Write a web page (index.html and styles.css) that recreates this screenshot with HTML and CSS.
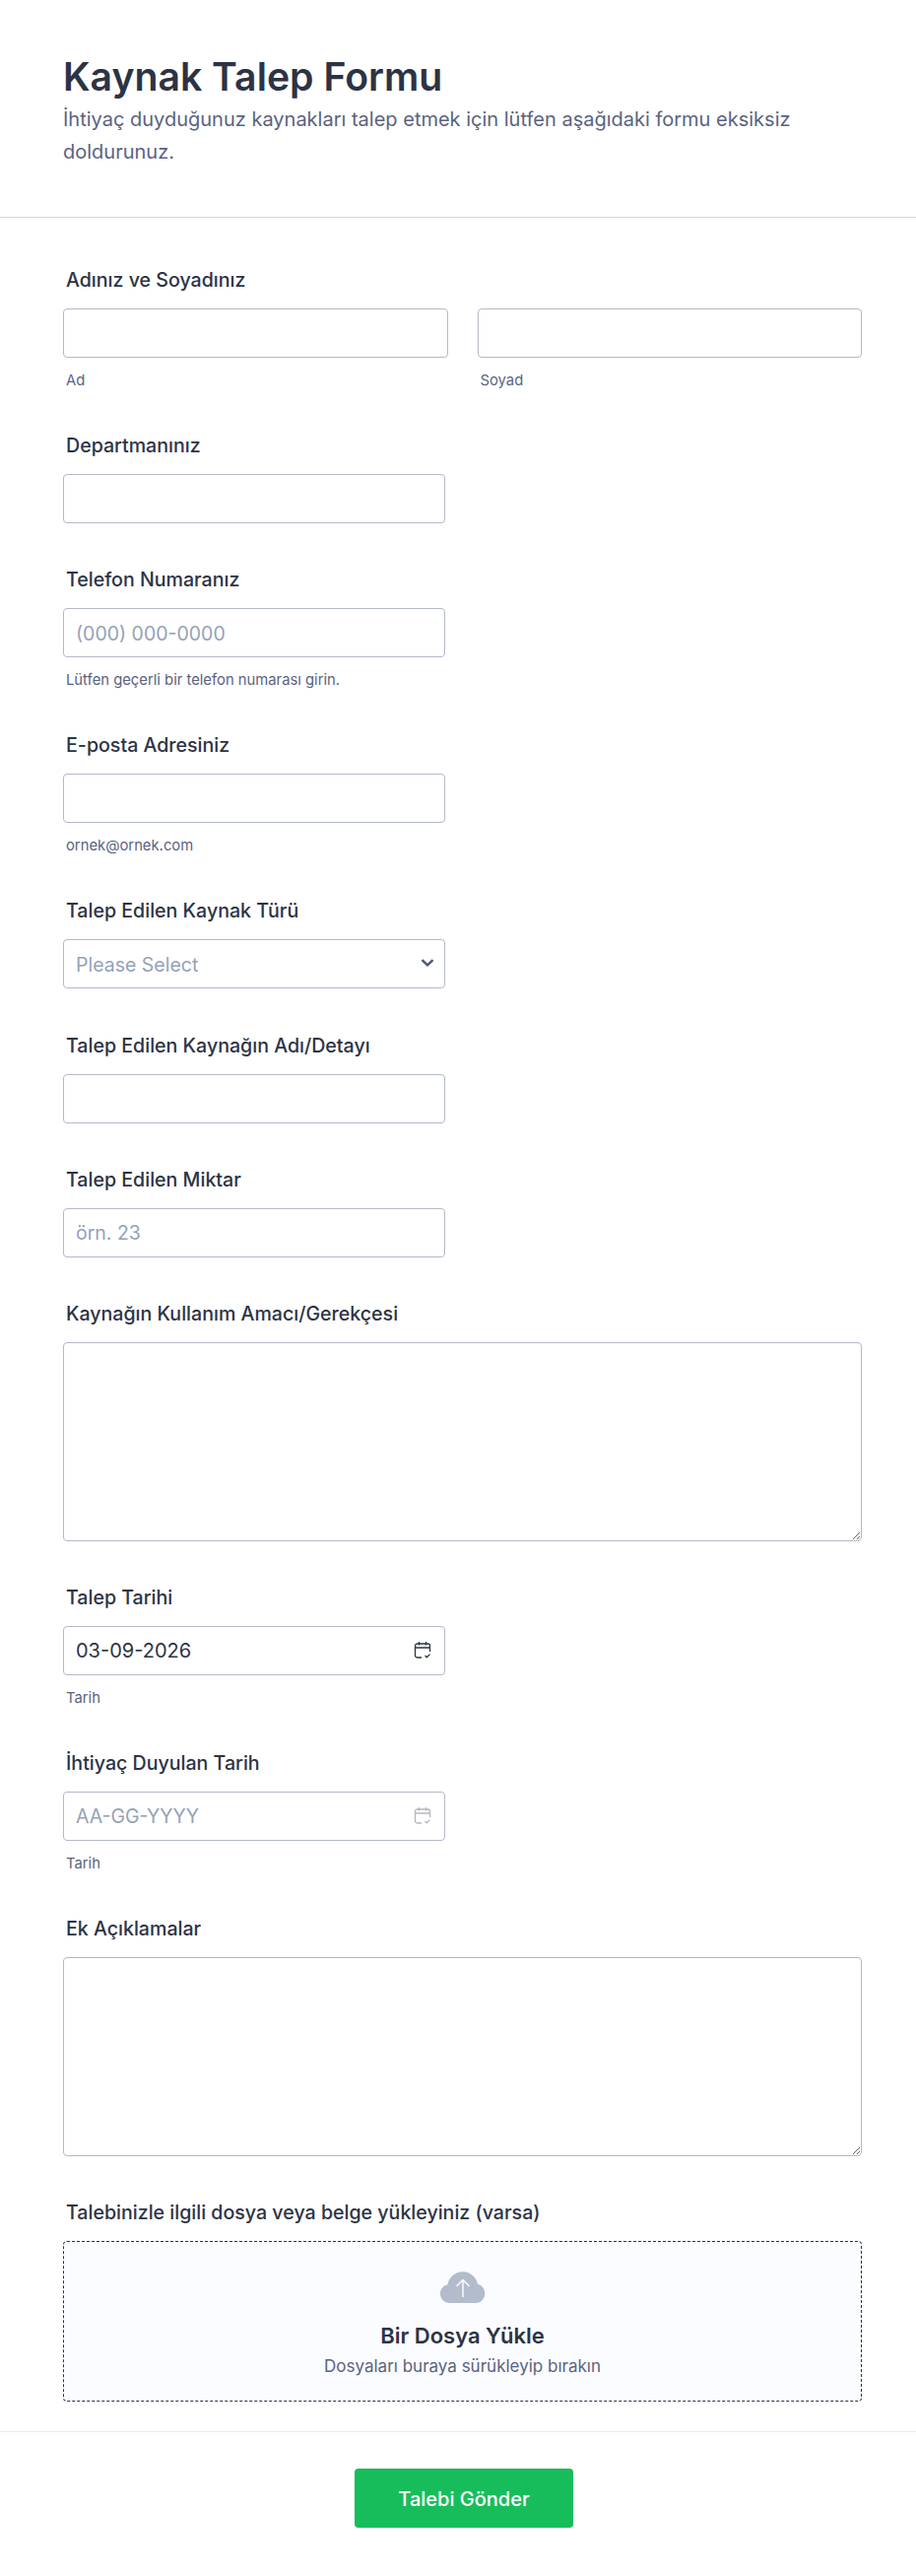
FILE: index.html
```html
<!DOCTYPE html>
<html lang="tr">
<head>
  <meta charset="UTF-8">
  <meta name="viewport" content="width=device-width, initial-scale=1.0">
  <title>Kaynak Talep Formu</title>
  <link rel="stylesheet" href="styles.css">
</head>
<body>
  <header class="form-header">
    <h1>Kaynak Talep Formu</h1>
    <p>İhtiyaç duyduğunuz kaynakları talep etmek için lütfen aşağıdaki formu eksiksiz doldurunuz.</p>
  </header>

  <form class="form-body">
    <div class="field">
      <label class="field-label">Adınız ve Soyadınız</label>
      <div class="name-row">
        <div>
          <input type="text" class="input input-full">
          <div class="hint">Ad</div>
        </div>
        <div>
          <input type="text" class="input input-full">
          <div class="hint">Soyad</div>
        </div>
      </div>
    </div>

    <div class="field">
      <label class="field-label">Departmanınız</label>
      <input type="text" class="input">
    </div>

    <div class="field">
      <label class="field-label">Telefon Numaranız</label>
      <input type="text" class="input" placeholder="(000) 000-0000">
      <div class="hint">Lütfen geçerli bir telefon numarası girin.</div>
    </div>

    <div class="field">
      <label class="field-label">E-posta Adresiniz</label>
      <input type="text" class="input">
      <div class="hint">ornek@ornek.com</div>
    </div>

    <div class="field">
      <label class="field-label">Talep Edilen Kaynak Türü</label>
      <div class="icon-wrap">
        <select class="input input-full select">
          <option>Please Select</option>
        </select>
        <svg class="chevron" width="14" height="10" viewBox="0 0 14 10"><path d="M1.500 2.200 7 7.400l5.500-5.200" fill="none" stroke="#4c5573" stroke-width="2.400"/></svg>
      </div>
    </div>

    <div class="field">
      <label class="field-label">Talep Edilen Kaynağın Adı/Detayı</label>
      <input type="text" class="input">
    </div>

    <div class="field">
      <label class="field-label">Talep Edilen Miktar</label>
      <input type="text" class="input" placeholder="örn. 23">
    </div>

    <div class="field">
      <label class="field-label">Kaynağın Kullanım Amacı/Gerekçesi</label>
      <textarea class="input textarea"></textarea>
    </div>

    <div class="field">
      <label class="field-label">Talep Tarihi</label>
      <div class="icon-wrap">
        <input type="text" class="input input-full" value="03-09-2026">
        <svg class="calendar" width="18" height="19" viewBox="0 0 18 19" fill="none" stroke="#2c3345" stroke-width="1.300"><path d="M8 17H3.500A2 2 0 0 1 1.500 15V5A2 2 0 0 1 3.500 3h11a2 2 0 0 1 2 2v6M1.500 7h15M5.500 1v3.500M12.500 1v3.500"/><path d="m11.500 15 1.800 1.800 3.200-3.200"/></svg>
      </div>
      <div class="hint">Tarih</div>
    </div>

    <div class="field">
      <label class="field-label">İhtiyaç Duyulan Tarih</label>
      <div class="icon-wrap">
        <input type="text" class="input input-full" placeholder="AA-GG-YYYY">
        <svg class="calendar calendar-off" width="18" height="19" viewBox="0 0 18 19" fill="none" stroke="#2c3345" stroke-width="1.300"><path d="M8 17H3.500A2 2 0 0 1 1.500 15V5A2 2 0 0 1 3.500 3h11a2 2 0 0 1 2 2v6M1.500 7h15M5.500 1v3.500M12.500 1v3.500"/><path d="m11.500 15 1.800 1.800 3.200-3.200"/></svg>
      </div>
      <div class="hint">Tarih</div>
    </div>

    <div class="field">
      <label class="field-label">Ek Açıklamalar</label>
      <textarea class="input textarea"></textarea>
    </div>

    <div class="field field-last">
      <label class="field-label">Talebinizle ilgili dosya veya belge yükleyiniz (varsa)</label>
      <div class="upload">
        <svg width="48" height="35" viewBox="0 0 48 35"><path d="M10 35A9.500 9.500 0 0 1 8.500 16.200 15.500 15.500 0 0 1 39 15.800 9.800 9.800 0 0 1 38 35Z" fill="#b3bccd"/><path d="M24 29V12M17.500 18 24 11.500 30.500 18" fill="none" stroke="#fff" stroke-width="1.400"/></svg>
        <div class="upload-title">Bir Dosya Yükle</div>
        <div class="upload-text">Dosyaları buraya sürükleyip bırakın</div>
      </div>
    </div>
  </form>

  <footer class="form-footer">
    <button type="button" class="submit">Talebi Gönder</button>
  </footer>
</body>
</html>
```

FILE: styles.css
```css
* { box-sizing: border-box; }
body { margin: 0; background: #fff; color: #2c3345; font-family: Inter, "Noto Sans", sans-serif; }

.form-header { height: 221px; padding: 53px 64px 0; border-bottom: 1px solid #d3d6e0; }
.form-header h1 { margin: 0 0 2px; font-size: 39.200px; line-height: 50px; font-weight: 600; }
.form-header p { margin: 0; font-size: 20px; line-height: 33px; color: #5a6380; }

.form-body { padding: 50px 55px 0 64px; }
.field { margin-bottom: 44.120px; }
.field-last { margin-bottom: 30px; }
.field-label { display: block; margin: 0 0 16px 3px; font-size: 19.600px; line-height: 26px; font-weight: 450; }

.input { display: block; width: 388px; height: 50px; padding: 1px 12px 0; border: 1px solid #b4b9ca; border-radius: 4px; background: #fff; color: #2c3345; font-family: inherit; font-size: 20px; outline: none; }
.input::placeholder { color: #94a2b8; opacity: 1; font-size: 19.500px; }
.input-full { width: 100%; }
.textarea { width: 100%; height: 202px; padding: 10px 12px; }

.name-row { display: flex; gap: 30px; }
.name-row > div { flex: 1; }
.hint { margin: 14px 0 0 3px; font-size: 14.800px; line-height: 18px; color: #5a6380; }

.icon-wrap { position: relative; width: 388px; }
.select { appearance: none; color: #94a2b8; font-size: 19.500px; }
.chevron { position: absolute; top: 19px; right: 11px; }
.calendar { position: absolute; top: 15px; right: 14px; }
.calendar-off { opacity: 0.35; }

.upload { display: flex; flex-direction: column; align-items: center; height: 163px; padding-top: 27px; border: 1px dashed #2c3345; border-radius: 4px; background: #fbfcff; }
.upload-title { margin-top: 17px; font-size: 22px; line-height: 32px; font-weight: 600; }
.upload-text { margin-top: 3px; font-size: 17px; line-height: 24px; color: #5a6380; }

.form-footer { display: flex; justify-content: center; height: 147px; padding: 37px 0 0 12px; border-top: 1px solid #e8eaef; }
.submit { width: 222px; height: 60px; padding-top: 2px; border: none; border-radius: 4px; background: #18bd5b; color: #fff; font-family: inherit; font-size: 20px; font-weight: 500; }
```
